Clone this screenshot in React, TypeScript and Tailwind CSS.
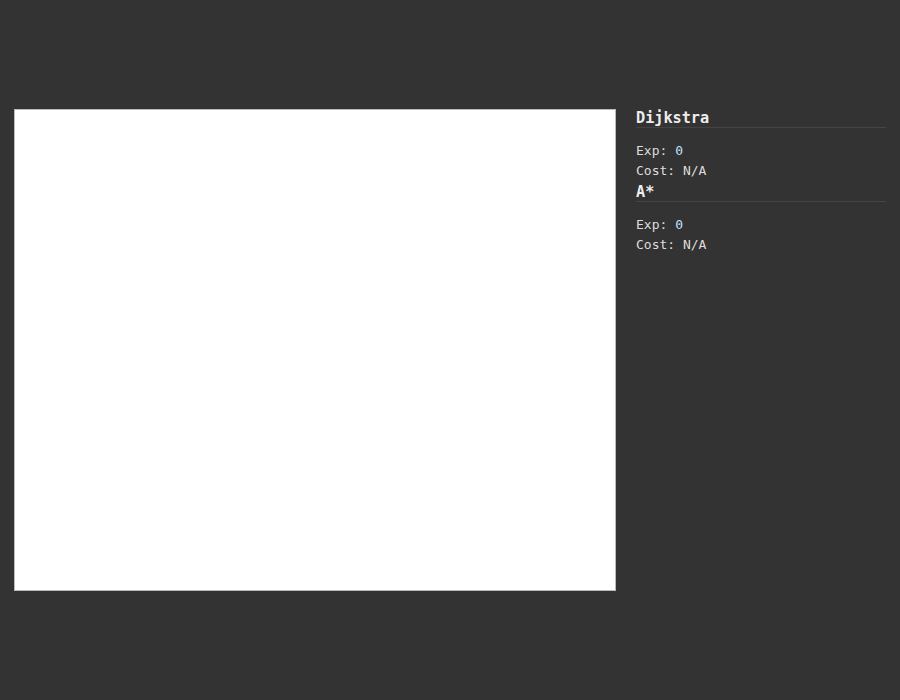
import React from "react";

const algos = [
  { name: "Dijkstra", exp: "0", cost: "N/A" },
  { name: "A*", exp: "0", cost: "N/A" },
];

export default function App() {
  return (
    <div
      className="min-h-[700px] w-full bg-[#333333] flex items-center justify-center gap-5 text-[13px] text-[#dddddd]"
      style={{ fontFamily: '"DejaVu Sans Mono", monospace' }}
    >
      <div className="w-[602px] h-[482px] bg-white border border-[#bbbbbb]" />
      <div className="w-[250px] h-[482px] flex flex-col">
        {algos.map((a) => (
          <div key={a.name} className="flex flex-col">
            <h3 className="m-0 text-[15.2px] font-bold text-[#eeeeee] leading-[18px] border-b border-[#444444]">
              {a.name}
            </h3>
            <div className="mt-[13px] mb-[2px] leading-5">
              <div>
                Exp: <span className="text-[#c0e0ff]">{a.exp}</span>
              </div>
              <div>Cost: {a.cost}</div>
            </div>
          </div>
        ))}
      </div>
    </div>
  );
}
